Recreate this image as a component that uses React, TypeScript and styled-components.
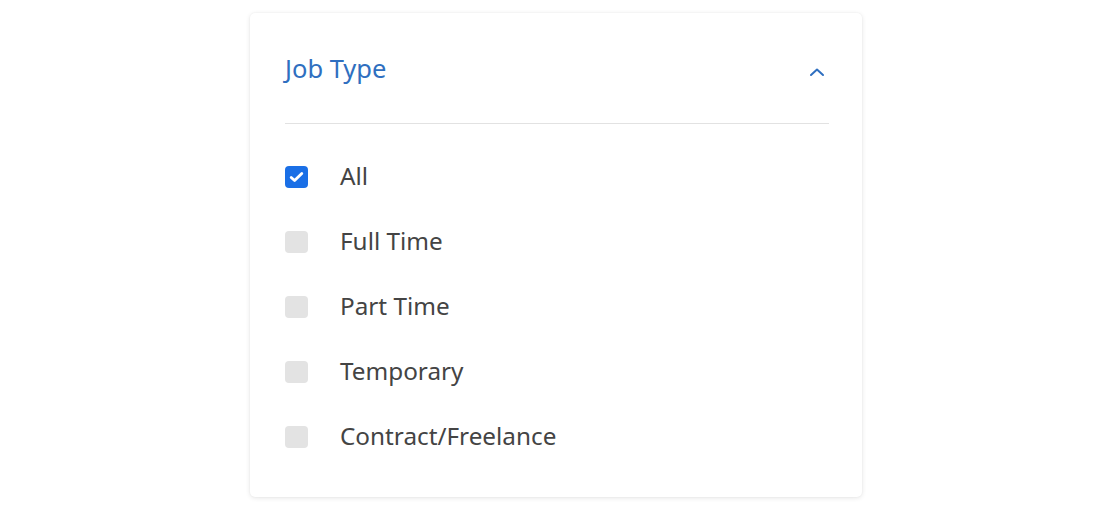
import styled, { createGlobalStyle } from "styled-components";

const GlobalStyle = createGlobalStyle`
  html, body {
    margin: 0;
    padding: 0;
    background: #ffffff;
  }
  body {
    font-family: "Noto Sans", "Open Sans", sans-serif;
  }
`;

const JOB_TYPES = [
  { label: "All", checked: true },
  { label: "Full Time", checked: false },
  { label: "Part Time", checked: false },
  { label: "Temporary", checked: false },
  { label: "Contract/Freelance", checked: false },
];

const ChevronUp = () => (
  <svg width="16" height="10" viewBox="0 0 16 10" fill="none">
    <path
      d="M2 8L8 2.5L14 8"
      stroke="#2f6fc0"
      strokeWidth="2"
      strokeLinecap="round"
      strokeLinejoin="round"
    />
  </svg>
);

const CheckMark = () => (
  <svg width="15" height="12" viewBox="0 0 15 12" fill="none">
    <path
      d="M2.2 6.4L5.6 9.6L12.8 2.4"
      stroke="#ffffff"
      strokeWidth="2.8"
      strokeLinecap="round"
      strokeLinejoin="round"
    />
  </svg>
);

export default function App() {
  return (
    <>
      <GlobalStyle />
      <Page>
        <FilterCard>
          <CardHeader>
            <HeaderTitle>Job Type</HeaderTitle>
            <ToggleButton aria-label="collapse">
              <ChevronUp />
            </ToggleButton>
          </CardHeader>
          <OptionList>
            {JOB_TYPES.map((item) => (
              <OptionRow key={item.label}>
                <CheckBox $checked={item.checked}>
                  {item.checked && <CheckMark />}
                </CheckBox>
                <OptionLabel>{item.label}</OptionLabel>
              </OptionRow>
            ))}
          </OptionList>
        </FilterCard>
      </Page>
    </>
  );
}

const Page = styled.div`
  display: flex;
  justify-content: center;
  width: 1114px;
  height: 517px;
  padding: 13px 2px 0 0;
  box-sizing: border-box;
`;

const FilterCard = styled.div`
  width: 612px;
  height: 484px;
  padding: 0 33px 0 35px;
  box-sizing: border-box;
  background: #ffffff;
  border-radius: 5px;
  box-shadow: 0 1px 5px rgba(0, 0, 0, 0.1), 0 0 2px rgba(0, 0, 0, 0.05);
  display: flex;
  flex-direction: column;
`;

const CardHeader = styled.div`
  display: flex;
  align-items: center;
  justify-content: space-between;
  height: 111px;
  box-sizing: border-box;
  border-bottom: 1px solid #e2e2e2;
`;

const HeaderTitle = styled.div`
  color: #2f6fc0;
  font-size: 25.5px;
  font-weight: 400;
  line-height: 1;
  margin-top: 2px;
`;

const ToggleButton = styled.button`
  display: flex;
  align-items: center;
  justify-content: center;
  border: none;
  background: none;
  padding: 0;
  margin-right: 4px;
  margin-top: 8px;
  cursor: pointer;
`;

const OptionList = styled.div`
  display: flex;
  flex-direction: column;
  padding-top: 20px;
`;

const OptionRow = styled.div`
  display: flex;
  align-items: center;
  gap: 32px;
  height: 65px;
`;

const CheckBox = styled.div<{ $checked: boolean }>`
  display: flex;
  align-items: center;
  justify-content: center;
  width: 23px;
  height: 22px;
  border-radius: 4px;
  background: ${({ $checked }) => ($checked ? "#1a6fe6" : "#e3e3e3")};
`;

const OptionLabel = styled.span`
  color: #444444;
  font-size: 24.3px;
  font-weight: 400;
  line-height: 1;
`;
